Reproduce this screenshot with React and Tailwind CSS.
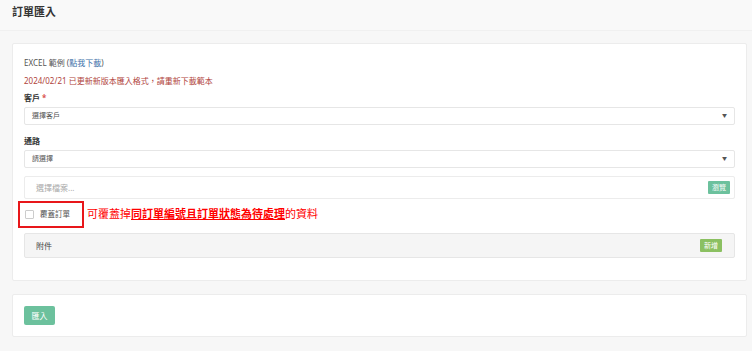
import React from 'react';

export default function App() {
  return (
    <div className="w-[752px] h-[351px] overflow-hidden bg-[#f7f7f7] font-['Noto_Sans','Noto_Sans_CJK_TC',sans-serif]">
      {/* 標題 */}
      <div className="h-[31px] border-b border-[#f0f0f0] bg-[#f9f9f9] px-[12px] pt-[4px]">
        <h1 className="text-[11px] font-bold text-[#333] leading-[16px]">訂單匯入</h1>
      </div>

      <div className="pl-[12px] pr-[5px] pt-[12px]">
        {/* 表單卡片 */}
        <div className="bg-white border border-[#ececec] rounded-[2px] px-[11px] pt-[13px] pb-[22px]">
          <p className="text-[8px] leading-[12px] text-[#555]">
            EXCEL 範例 (<span className="text-[#3a6fa8]">點我下載</span>)
          </p>
          <p className="mt-[6px] text-[8px] leading-[12px] text-[#b0443c]">
            2024/02/21 已更新新版本匯入格式，請重新下載範本
          </p>

          <label className="mt-[5px] block text-[8px] font-bold leading-[12px] text-[#333]">
            客戶 <span className="text-[#d9534f]">*</span>
          </label>
          <div className="mt-[3px] h-[18px] border border-[#e6e6e6] rounded-[2px] flex items-center justify-between px-[7px]">
            <span className="text-[7px] text-[#555]">選擇客戶</span>
            <span className="text-[5px] text-[#555]">▼</span>
          </div>

          <label className="mt-[10px] block text-[8px] font-bold leading-[12px] text-[#333]">通路</label>
          <div className="mt-[3px] h-[18px] border border-[#e6e6e6] rounded-[2px] flex items-center justify-between px-[7px]">
            <span className="text-[7px] text-[#555]">請選擇</span>
            <span className="text-[5px] text-[#555]">▼</span>
          </div>

          {/* 檔案 */}
          <div className="mt-[8px] h-[23px] border border-[#ececec] rounded-[2px] flex items-center justify-between pl-[11px] pr-[4px]">
            <span className="text-[8px] text-[#aaa]">選擇檔案...</span>
            <button className="h-[13px] px-[4px] bg-[#6cc19d] text-white text-[7px] rounded-[1px] leading-none">瀏覽</button>
          </div>

          {/* 覆蓋訂單 */}
          <div className="flex items-center -ml-[6px] mt-[2px]">
            <div className="h-[27px] w-[66px] border-2 border-[#e8171a] flex items-center pl-[5px]">
              <span className="w-[9px] h-[9px] border border-[#ccc] rounded-[1px] bg-white"></span>
              <span className="ml-[6px] text-[7.5px] text-[#555]">覆蓋訂單</span>
            </div>
            <p className="ml-[3px] text-[11px] text-[#f00] leading-none -mt-[2px]">
              可覆蓋掉<span className="underline font-bold">同訂單編號且訂單狀態為待處理</span>的資料
            </p>
          </div>

          {/* 附件 */}
          <div className="mt-[5px] h-[25px] border border-[#e6e6e6] bg-[#f5f5f5] rounded-[2px] flex items-center justify-between pl-[11px] pr-[12px]">
            <span className="text-[8px] text-[#444]">附件</span>
            <button className="h-[13px] px-[4px] bg-[#8bc061] text-white text-[7px] rounded-[1px] leading-none">新增</button>
          </div>
        </div>

        {/* 送出卡片 */}
        <div className="mt-[13px] h-[43px] bg-white border border-[#ececec] rounded-[2px] px-[11px] flex items-center">
          <button className="h-[19px] w-[31px] bg-[#6cc19d] text-white text-[8px] rounded-[2px]">匯入</button>
        </div>
      </div>
    </div>
  );
}
